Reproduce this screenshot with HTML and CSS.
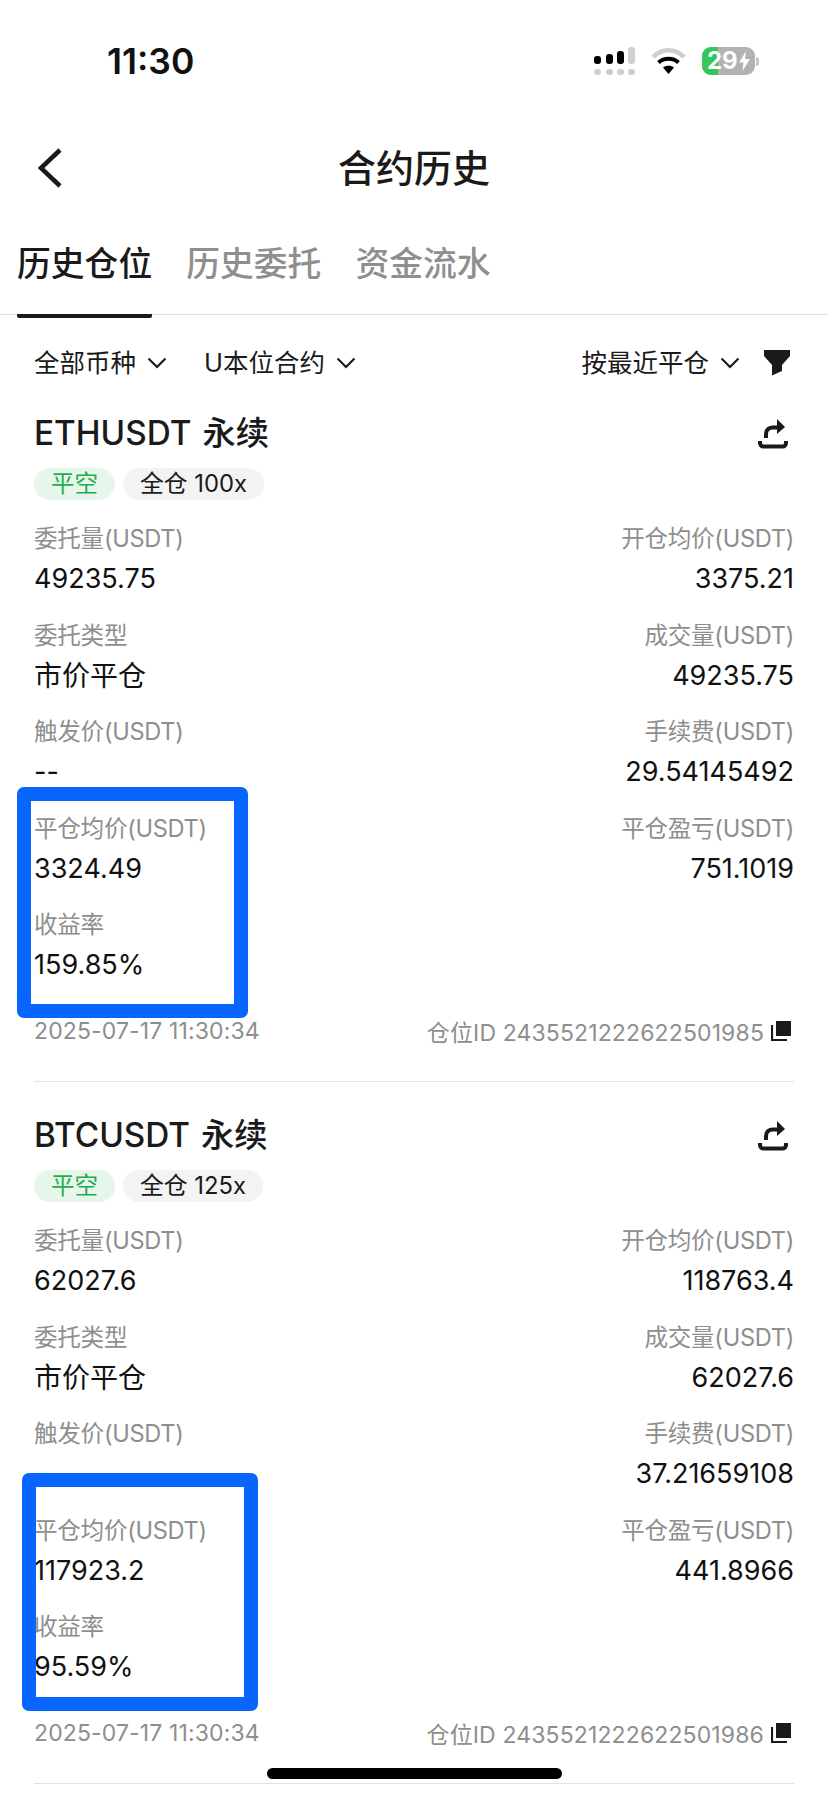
FILE: index.html
```html
<!DOCTYPE html>
<html lang="zh-CN">
<head>
    <meta charset="UTF-8">
    <meta name="viewport" content="width=device-width, initial-scale=1.0">
    <title>合约历史</title>
    <link rel="stylesheet" href="styles.css">
</head>
<body>
    <!-- Status bar -->
    <div class="status-bar">
        <span class="clock">11:30</span>
        <div class="status-icons">
            <svg class="signal" width="42" height="29" viewBox="0 0 42 29">
                <rect x="0" y="9" width="7" height="8" rx="3"/>
                <rect x="12" y="7" width="7" height="10" rx="3"/>
                <rect x="23" y="4" width="7" height="13" rx="3"/>
                <rect x="34" y="0" width="7" height="17" rx="3" fill="#cfcfcf"/>
                <g fill="#cfcfcf">
                    <rect x="0" y="22" width="7" height="6" rx="3"/>
                    <rect x="12" y="22" width="7" height="6" rx="3"/>
                    <rect x="23" y="22" width="7" height="6" rx="3"/>
                    <rect x="34" y="22" width="7" height="6" rx="3"/>
                </g>
            </svg>
            <svg class="wifi" width="35" height="27" viewBox="0 0 35 27">
                <path d="M2 9 C11 0 24 0 33 9" fill="none" stroke="#cdcdcd" stroke-width="4.5"/>
                <path d="M7.500 14.500 C13 9.500 22 9.500 27.500 14.500" fill="none" stroke="#000" stroke-width="4"/>
                <path d="M12 19.500 C15 17 20 17 23 19.500 L17.500 26 Z" fill="#000"/>
            </svg>
            <div class="battery">
                <div class="battery-fill"></div>
                <span class="battery-num">29</span>
                <svg class="bolt" width="11" height="20" viewBox="0 0 11 20">
                    <path d="M7 0 L0 11.500 H4.500 L3.500 20 L11 8 H6 Z" fill="#fff"/>
                </svg>
            </div>
            <div class="battery-nub"></div>
        </div>
    </div>

    <!-- Header -->
    <div class="header">
        <svg class="back" width="26" height="40" viewBox="0 0 26 40">
            <path d="M23 2 L4 20 L23 38" fill="none" stroke="#1a1a1a" stroke-width="4.500"/>
        </svg>
        <h1>合约历史</h1>
    </div>

    <!-- Tabs -->
    <div class="tabs">
        <div class="tab active">历史仓位</div>
        <div class="tab">历史委托</div>
        <div class="tab">资金流水</div>
    </div>

    <!-- Filters -->
    <div class="filters">
        <span class="filter filter-coin">全部币种
            <svg class="chev" width="20" height="12" viewBox="0 0 20 12"><path d="M1.500 1.500 L10 10 L18.500 1.500" fill="none" stroke="#1a1a1a" stroke-width="2.200"/></svg>
        </span>
        <span class="filter">U本位合约
            <svg class="chev" width="20" height="12" viewBox="0 0 20 12"><path d="M1.500 1.500 L10 10 L18.500 1.500" fill="none" stroke="#1a1a1a" stroke-width="2.200"/></svg>
        </span>
        <span class="filter filter-sort">按最近平仓
            <svg class="chev" width="20" height="12" viewBox="0 0 20 12"><path d="M1.500 1.500 L10 10 L18.500 1.500" fill="none" stroke="#1a1a1a" stroke-width="2.200"/></svg>
        </span>
        <svg class="funnel" width="26" height="26" viewBox="0 0 26 26">
            <path d="M0 0 H26 V6 L18 15 V21 L8 25.500 V15 L0 6 Z" fill="#1a1a1a"/>
        </svg>
    </div>

    <!-- ETH -->
    <div class="card">
        <div class="card-inner">
            <div class="card-title">
                <h2>ETHUSDT 永续</h2>
                <svg class="share" width="30" height="30" viewBox="0 0 30 30">
                    <path d="M8 19 V15 C8 10.500 11 8.500 15 8.500 H20" fill="none" stroke="#1a1a1a" stroke-width="4"/>
                    <path d="M19 0 L27 8 L19 15 Z" fill="#1a1a1a"/>
                    <path d="M2 22 V24 C2 26 3.500 27.500 5.500 27.500 H24.500 C26.500 27.500 28 26 28 24 V22" fill="none" stroke="#1a1a1a" stroke-width="4"/>
                </svg>
            </div>
            <div class="tags">
                <span class="tag tag-green">平空</span>
                <span class="tag">全仓 100x</span>
            </div>
            <div class="fields">
                <div class="field"><div class="label">委托量(USDT)</div><div class="value">49235.75</div></div>
                <div class="field right"><div class="label">开仓均价(USDT)</div><div class="value">3375.21</div></div>
                <div class="field"><div class="label">委托类型</div><div class="value value-cn">市价平仓</div></div>
                <div class="field right"><div class="label">成交量(USDT)</div><div class="value">49235.75</div></div>
                <div class="field"><div class="label">触发价(USDT)</div><div class="value">--</div></div>
                <div class="field right"><div class="label">手续费(USDT)</div><div class="value">29.54145492</div></div>
                <div class="field"><div class="label">平仓均价(USDT)</div><div class="value">3324.49</div></div>
                <div class="field right"><div class="label">平仓盈亏(USDT)</div><div class="value">751.1019</div></div>
                <div class="field"><div class="label">收益率</div><div class="value">159.85%</div></div>
            </div>
            <div class="card-foot">
                <span>2025-07-17 11:30:34</span>
                <span class="pos-id">仓位ID 2435521222622501985
                    <svg class="copy" width="20" height="20" viewBox="0 0 20 20">
                        <rect x="5" y="0" width="15" height="15" fill="#1a1a1a"/>
                        <path d="M1 4 V19 H16" fill="none" stroke="#1a1a1a" stroke-width="2.200"/>
                    </svg>
                </span>
            </div>
        </div>
        <div class="mark mark-eth"></div>
    </div>

    <!-- BTC -->
    <div class="card">
        <div class="card-inner">
            <div class="card-title">
                <h2>BTCUSDT 永续</h2>
                <svg class="share" width="30" height="30" viewBox="0 0 30 30">
                    <path d="M8 19 V15 C8 10.500 11 8.500 15 8.500 H20" fill="none" stroke="#1a1a1a" stroke-width="4"/>
                    <path d="M19 0 L27 8 L19 15 Z" fill="#1a1a1a"/>
                    <path d="M2 22 V24 C2 26 3.500 27.500 5.500 27.500 H24.500 C26.500 27.500 28 26 28 24 V22" fill="none" stroke="#1a1a1a" stroke-width="4"/>
                </svg>
            </div>
            <div class="tags">
                <span class="tag tag-green">平空</span>
                <span class="tag">全仓 125x</span>
            </div>
            <div class="fields">
                <div class="field"><div class="label">委托量(USDT)</div><div class="value">62027.6</div></div>
                <div class="field right"><div class="label">开仓均价(USDT)</div><div class="value">118763.4</div></div>
                <div class="field"><div class="label">委托类型</div><div class="value value-cn">市价平仓</div></div>
                <div class="field right"><div class="label">成交量(USDT)</div><div class="value">62027.6</div></div>
                <div class="field"><div class="label">触发价(USDT)</div><div class="value">--</div></div>
                <div class="field right"><div class="label">手续费(USDT)</div><div class="value">37.21659108</div></div>
                <div class="field"><div class="label">平仓均价(USDT)</div><div class="value">117923.2</div></div>
                <div class="field right"><div class="label">平仓盈亏(USDT)</div><div class="value">441.8966</div></div>
                <div class="field"><div class="label">收益率</div><div class="value">95.59%</div></div>
            </div>
            <div class="card-foot">
                <span>2025-07-17 11:30:34</span>
                <span class="pos-id">仓位ID 2435521222622501986
                    <svg class="copy" width="20" height="20" viewBox="0 0 20 20">
                        <rect x="5" y="0" width="15" height="15" fill="#1a1a1a"/>
                        <path d="M1 4 V19 H16" fill="none" stroke="#1a1a1a" stroke-width="2.200"/>
                    </svg>
                </span>
            </div>
        </div>
        <div class="mark mark-btc"></div>
    </div>

    <div class="home-bar"></div>
</body>
</html>
```

FILE: styles.css
```css
html, body {
    margin: 0;
    height: 1796px;
    overflow: hidden;
}

body {
    position: relative;
    background-color: #fff;
    color: #1a1a1a;
    font-family: Inter, "Noto Sans CJK SC", sans-serif;
}

h1, h2 {
    margin: 0;
    font-weight: 500;
}

/* --- status bar --- */
.status-bar {
    height: 122px;
    display: flex;
    align-items: center;
    justify-content: space-between;
    padding: 0 69px 0 107px;
}

.clock {
    font-size: 35.500px;
    font-weight: 600;
    color: #111;
}

.status-icons {
    display: flex;
    align-items: center;
}

.signal {
    margin-right: 15px;
}

.wifi {
    margin-right: 16px;
}

.battery {
    position: relative;
    width: 53px;
    height: 28px;
    border-radius: 9px;
    background-color: #b2b2b2;
    overflow: hidden;
    display: flex;
    align-items: center;
    padding-left: 5px;
    box-sizing: border-box;
}

.battery-fill {
    position: absolute;
    left: 0;
    top: 0;
    bottom: 0;
    width: 16px;
    background-color: #34c759;
}

.battery-num {
    position: relative;
    color: #fff;
    font-size: 24px;
    font-weight: 700;
    line-height: 28px;
}

.bolt {
    position: relative;
    margin-left: 1px;
}

.battery-nub {
    width: 3px;
    height: 9px;
    margin-left: 1px;
    border-radius: 0 3px 3px 0;
    background-color: #c4c4c4;
}

/* --- header --- */
.header {
    height: 92px;
    position: relative;
    display: flex;
    align-items: center;
    justify-content: center;
}

.header h1 {
    font-size: 38px;
    line-height: 50px;
    color: #1a1a1a;
}

.back {
    position: absolute;
    left: 37px;
    top: 26px;
}

/* --- tabs --- */
.tabs {
    height: 100px;
    display: flex;
    gap: 34px;
    padding: 0 17px;
    border-bottom: 1px solid #dedede;
}

.tab {
    font-size: 33.800px;
    font-weight: 500;
    line-height: 44px;
    padding-top: 28px;
    height: 72px;
    color: #8f8f8f;
}

.tab.active {
    color: #1a1a1a;
    border-bottom: 4px solid #1a1a1a;
    border-radius: 0 0 2px 2px;
}

/* --- filters --- */
.filters {
    height: 96px;
    display: flex;
    align-items: center;
    padding: 0 38px 0 34px;
    font-size: 25.500px;
}

.filter {
    display: flex;
    align-items: center;
    gap: 11px;
    line-height: 36px;
    margin-right: 37px;
}

.filter-sort {
    margin-left: auto;
    margin-right: 24px;
}

.funnel {
    flex: none;
}

/* --- position cards --- */
.card {
    position: relative;
    height: 702px;
    padding: 0 34px;
    box-sizing: border-box;
}

.card-inner {
    height: 670px;
    border-bottom: 1px solid #e2e2e2;
}

.card-title {
    display: flex;
    justify-content: space-between;
    align-items: center;
    height: 44px;
}

.card-title h2 {
    font-size: 33.300px;
    line-height: 44px;
    word-spacing: 2px;
}

.share {
    margin-right: 6px;
    margin-top: 2px;
}

.tags {
    display: flex;
    gap: 8px;
    margin-top: 13px;
}

.tag {
    height: 32px;
    line-height: 32px;
    padding: 0 17px;
    border-radius: 16px;
    font-size: 23.800px;
    background-color: #f3f3f3;
}

.tag-green {
    background-color: #e6f6ea;
    color: #1fae4f;
    font-size: 23.500px;
}

.fields {
    display: grid;
    grid-template-columns: 1fr 1fr;
    grid-auto-rows: 80px;
    row-gap: 16.500px;
    margin-top: 19px;
    height: 464px;
}

.field.right {
    text-align: right;
}

.label {
    font-size: 23.600px;
    line-height: 40px;
    letter-spacing: -0.3px;
    color: #8e8e8e;
}

.value {
    font-size: 27px;
    line-height: 40px;
    color: #111;
}

.value-cn {
    font-size: 28px;
}

.card-foot {
    display: flex;
    justify-content: space-between;
    align-items: center;
    height: 32px;
    margin-top: 32px;
    font-size: 23px;
    letter-spacing: 0.13px;
    color: #8e8e8e;
}

.pos-id {
    display: flex;
    align-items: center;
    gap: 7px;
}

.copy {
    margin-right: 3px;
}

/* blue boxes drawn over the screenshot */
.mark {
    position: absolute;
    box-sizing: border-box;
    border: 14px solid #0866ff;
    border-radius: 7px;
}

.mark-eth {
    left: 17px;
    top: 376px;
    width: 231px;
    height: 231px;
}

.mark-btc {
    left: 22px;
    top: 360px;
    width: 236px;
    height: 238px;
}

.home-bar {
    position: absolute;
    left: 267px;
    top: 1768px;
    width: 295px;
    height: 11px;
    border-radius: 6px;
    background-color: #000;
}
```
